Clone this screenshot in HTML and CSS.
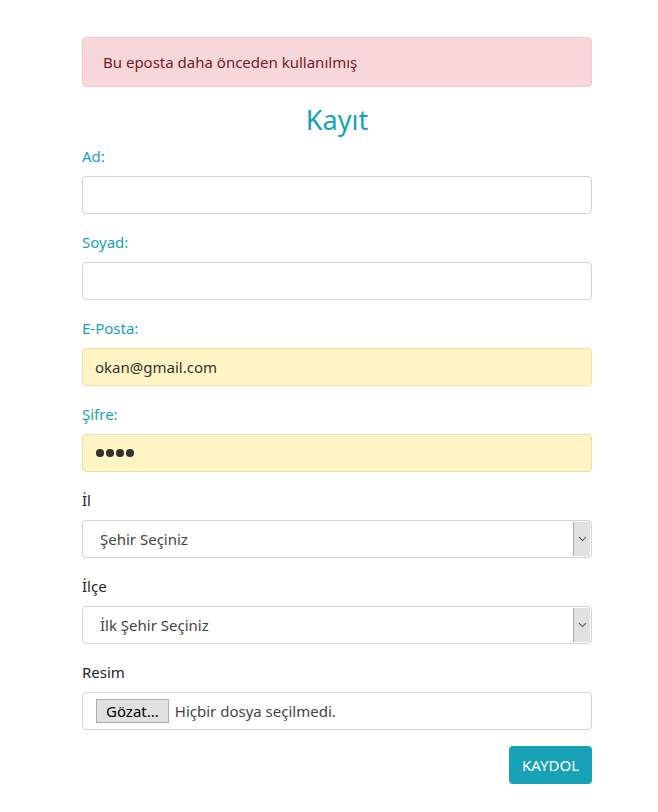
FILE: index.html
```html
<!DOCTYPE html>
<html lang="tr">
<head>
<meta charset="utf-8">
<title>Kayıt</title>
<link rel="stylesheet" href="styles.css">
</head>
<body>
<div class="container">
  <div class="alert">Bu eposta daha önceden kullanılmış</div>
  <h3 class="title">Kayıt</h3>
  <form class="form">
    <div class="group">
      <label class="label info">Ad:</label>
      <div class="input"></div>
    </div>
    <div class="group">
      <label class="label info">Soyad:</label>
      <div class="input"></div>
    </div>
    <div class="group">
      <label class="label info">E-Posta:</label>
      <div class="input filled">okan@gmail.com</div>
    </div>
    <div class="group">
      <label class="label info">Şifre:</label>
      <div class="input filled dots"><span class="dot"></span><span class="dot"></span><span class="dot"></span><span class="dot"></span></div>
    </div>
    <div class="group">
      <label class="label">İl</label>
      <div class="select"><span class="select-text">Şehir Seçiniz</span><span class="arrow"><svg width="9" height="6" viewBox="0 0 9 6"><path d="M1 1.2 L4.5 4.6 L8 1.2" fill="none" stroke="#555" stroke-width="1.1"/></svg></span></div>
    </div>
    <div class="group">
      <label class="label">İlçe</label>
      <div class="select"><span class="select-text">İlk Şehir Seçiniz</span><span class="arrow"><svg width="9" height="6" viewBox="0 0 9 6"><path d="M1 1.2 L4.5 4.6 L8 1.2" fill="none" stroke="#555" stroke-width="1.1"/></svg></span></div>
    </div>
    <div class="group">
      <label class="label">Resim</label>
      <div class="file"><span class="file-btn">Gözat...</span><span class="file-text">Hiçbir dosya seçilmedi.</span></div>
    </div>
    <div class="actions">
      <span class="btn">KAYDOL</span>
    </div>
  </form>
</div>
</body>
</html>
```

FILE: styles.css
```css
* { box-sizing: border-box; }
html, body { margin: 0; padding: 0; background: #fff; }
body {
  font-family: "Noto Sans", "Open Sans", sans-serif;
  font-size: 15px;
  line-height: 24px;
  color: #212529;
}
.container {
  width: 510px;
  margin-left: 82px;
  padding-top: 37px;
}
.alert {
  background: #f8d7da;
  border: 1px solid #f5c6cb;
  color: #721c24;
  border-radius: 4px;
  padding: 12px 20px;
  height: 50px;
  margin-bottom: 16px;
}
.title {
  margin: 0 0 8px 0;
  text-align: center;
  font-weight: 400;
  font-size: 27px;
  line-height: 34px;
  height: 34px;
  color: #17a2b8;
}
.group { margin-bottom: 16px; display: flex; flex-direction: column; }
.group:first-child { margin-top: -1px; }
.label { display: block; margin-bottom: 8px; line-height: 24px; color: #212529; }
.label.info { color: #17a2b8; }
.input {
  height: 38px;
  border: 1px solid #ced4da;
  border-radius: 4px;
  padding: 6px 12px;
  font-size: 15px;
  color: #333;
}
.input.filled { background: #fff5c4; border-color: #ecdca5; }
.dots { display: flex; align-items: center; gap: 2.5px; padding-left: 13px; }
.dot { width: 7.5px; height: 7.5px; border-radius: 50%; background: #333; }
.select {
  position: relative;
  height: 38px;
  border: 1px solid #ced4da;
  border-radius: 4px;
  padding: 6px 17px;
  font-size: 15px;
  color: #444;
}
.arrow {
  position: absolute;
  right: 1px;
  top: 1px;
  bottom: 1px;
  width: 17px;
  background: #e1e1e1;
  border-left: 1px solid #a9a9a9;
  display: flex;
  align-items: center;
  justify-content: center;
}
.file {
  height: 38px;
  border: 1px solid #ced4da;
  border-radius: 4px;
  padding: 0 13px;
  display: flex;
  align-items: center;
  gap: 6px;
  font-size: 15px;
  color: #444;
}
.file-btn {
  height: 24px;
  line-height: 22px;
  padding: 0 9px;
  background: #e1e1e1;
  border: 1px solid #adadad;
  color: #000;
}
.actions { display: flex; justify-content: flex-end; }
.btn {
  background: #17a2b8;
  color: #fff;
  border-radius: 4px;
  height: 38px;
  line-height: 38px;
  padding: 0 13px;
  font-size: 15px;
}
```
